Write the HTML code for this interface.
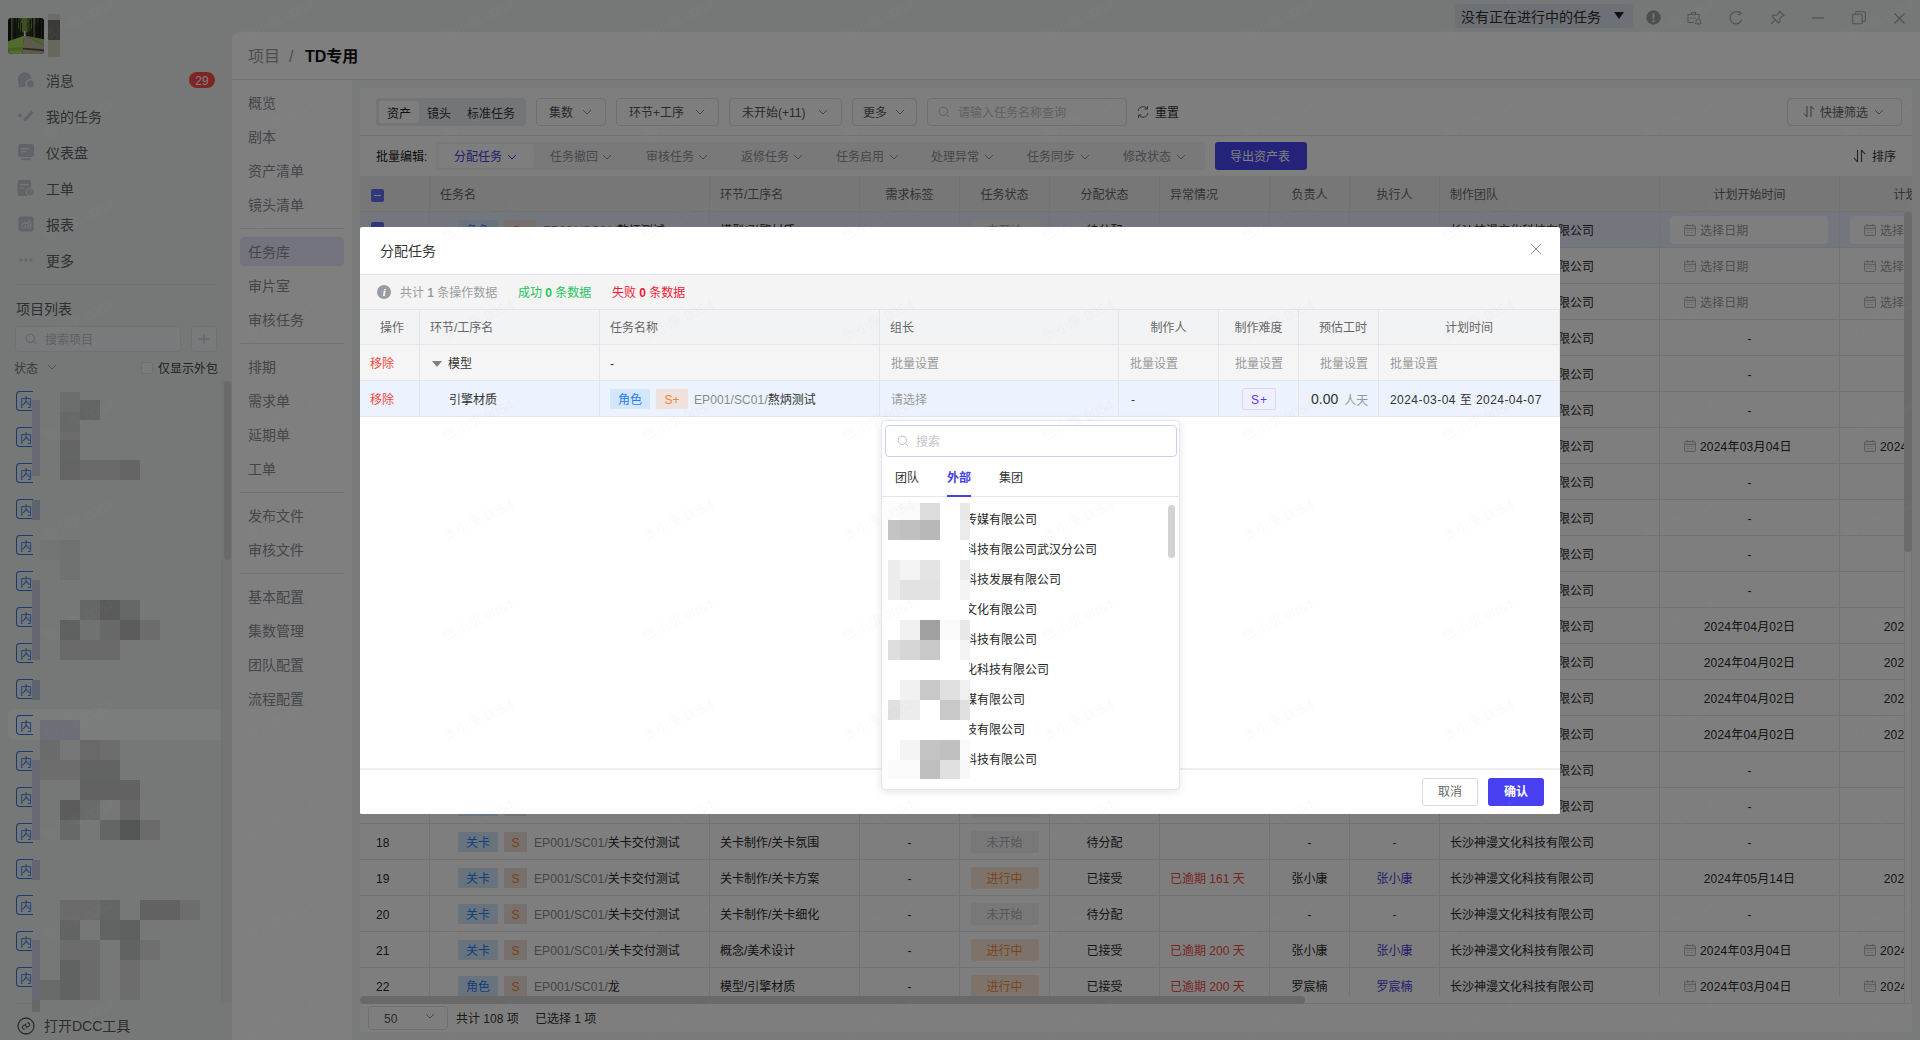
<!DOCTYPE html><html lang="zh-CN"><head><meta charset="utf-8"><title>TD专用 - 任务库</title><style>
*{box-sizing:border-box;margin:0;padding:0}
html,body{width:1920px;height:1040px;overflow:hidden;background:#edf1f0}
body{font-family:"Liberation Sans","Noto Sans CJK SC",sans-serif;font-size:12px;color:#333;line-height:1}
#app{position:relative;width:1920px;height:1040px;overflow:hidden;background:#edf1f0}
.abs{position:absolute}
.t{position:absolute;white-space:nowrap;line-height:22px;height:22px}
/* sidebar */
.sb-item{position:absolute;left:46px;font-size:14px;color:#5c6068;line-height:22px;white-space:nowrap}
.sb-ico{position:absolute;left:17px;width:18px;height:18px}
.badge{position:absolute;left:189px;top:72px;width:26px;height:16px;border-radius:8px;background:#fc4a4a;color:#fff;font-size:12px;line-height:19px;text-align:center;overflow:hidden}
.proj-tag{position:absolute;left:16px;width:17px;height:20px;border:1px solid #2a7ae8;border-right:none;border-radius:4px 0 0 4px;color:#2a7ae8;font-size:12px;line-height:22px;padding-left:3px;overflow:hidden}
/* main */
#main{position:absolute;left:232px;top:32px;width:1688px;height:1008px;background:#fff;border-radius:8px 0 0 0;overflow:hidden}
.nav-item{position:absolute;left:16px;font-size:14px;color:#888c93;line-height:20px;white-space:nowrap}
.nav-div{position:absolute;left:8px;width:104px;height:1px;background:#e6e7e9}
#gap{position:absolute;left:120px;top:48px;width:1568px;height:960px;background:#f3f4f5}
#card{position:absolute;left:128px;top:56px;width:1552px;height:944px;background:#fcfcfc;overflow:hidden}
.sel{position:absolute;top:10px;height:28px;border:1px solid #dcdee2;border-radius:4px;background:#fcfcfc;font-size:12px;color:#555;line-height:28px;white-space:nowrap;overflow:hidden}
.chev{position:absolute;width:10px;height:6px}
.bt{position:absolute;top:66px;font-size:12px;color:#80848c;line-height:20px;white-space:nowrap}
/* table */
#thead{position:absolute;left:0;top:88px;width:1552px;height:36px;background:#eeefef;border-bottom:1px solid #e3e4e6;overflow:hidden}
#tbody{position:absolute;left:0;top:124px;width:1544px;height:784px;overflow:hidden}
.tr{position:absolute;left:0;width:1660px;height:36px;border-bottom:1px solid #e3e4e6}
.td,.th{position:absolute;top:0;height:36px;border-right:1px solid #e3e4e6;line-height:39px;white-space:nowrap;overflow:hidden;font-size:12px}
.th{color:#666;}
.td{color:#2b2b2b}
.c{text-align:center}
.l{padding-left:10px}
.tag{display:inline-block;position:relative;top:-2px;overflow:hidden;height:20px;line-height:22px;border-radius:1px;font-size:12px;text-align:center;vertical-align:middle}
.tag-b{background:#d3e6fd;color:#1f7ff0;width:40px}
.tag-o{background:#efe1db;color:#f0853a;width:23px;margin-left:6px}
.g{color:#8a8a8a;letter-spacing:.1px}
.st{display:inline-block;position:relative;top:-2px;overflow:hidden;width:68px;height:22px;line-height:24px;border-radius:2px;text-align:center;vertical-align:middle}
.st-n{background:#f0f0f1;color:#a9adb3}
.st-p{background:#fde6d5;color:#f08a3c}
.red{color:#f04a44}
.lnk{color:#4643d8}
.cal{display:inline-block;width:12px;height:12px;vertical-align:-2px;margin-right:4px;position:relative;top:-1px}
/* overlay & modal */
#mask{position:absolute;left:0;top:0;width:1920px;height:1040px;background:rgba(0,0,0,.5)}
#modal{position:absolute;left:360px;top:227px;width:1200px;height:587px;background:#fff;overflow:hidden;border-radius:2px}
.mth{position:absolute;top:0;height:35px;line-height:39px;overflow:hidden;border-right:1px solid #e4e5e8;color:#666;font-size:12px;white-space:nowrap}
.mtd{position:absolute;top:0;height:36px;line-height:39px;overflow:hidden;border-right:1px solid #e4e5e8;font-size:12px;white-space:nowrap;color:#333}
.ph{color:#9a9a9a}
#dd{position:absolute;left:881px;top:420px;width:299px;height:370px;background:#fff;border:1px solid #e3e6f6;border-radius:4px;box-shadow:0 2px 8px rgba(0,0,0,.10);overflow:hidden}
.opt{position:absolute;left:87px;width:200px;height:20px;line-height:20px;font-size:12px;color:#262626;overflow:hidden;white-space:nowrap}
.opt span{display:inline-block;margin-left:-4px}
.px{position:absolute}
.wm{position:absolute;width:80px;text-align:center;font-size:14px;color:rgba(172,172,172,.07);transform:rotate(-25deg);white-space:nowrap;line-height:16px;pointer-events:none}
</style></head><body><div id="app">
<div class="abs" style="left:8px;top:18px;width:36px;height:36px;border-radius:4px;overflow:hidden;background:#2e3022"><svg width="36" height="36" viewBox="0 0 36 36"><g><rect x="-2" y="-2" width="40" height="40" fill="#34382a"/><ellipse cx="17" cy="5" rx="8" ry="10" fill="#7d9c42"/><ellipse cx="25" cy="2" rx="6" ry="5" fill="#5b7431"/><ellipse cx="9" cy="1" rx="5" ry="4" fill="#4d6230"/><rect x="0" y="-1" width="3.2" height="27" fill="#15150f"/><rect x="3.2" y="-1" width="1.2" height="24" fill="#77776a"/><rect x="5.5" y="-1" width="2.2" height="23" fill="#1c1c14"/><rect x="8.6" y="-1" width="1.6" height="22" fill="#24241a"/><rect x="11" y="2" width="1.2" height="19" fill="#2a2a1e"/><rect x="13" y="5" width="1" height="15" fill="#30301f"/><rect x="19.5" y="5" width="1" height="14" fill="#30301f"/><rect x="21.5" y="2" width="1.3" height="18" fill="#26261b"/><rect x="24" y="-1" width="1.5" height="21" fill="#1f1f16"/><rect x="25.5" y="-1" width="1" height="20" fill="#8a8a7c"/><rect x="27.5" y="-1" width="2" height="22" fill="#1a1a12"/><rect x="30.5" y="-1" width="2.300" height="24" fill="#15150f"/><rect x="34" y="-1" width="3" height="25" fill="#1c1c14"/><polygon points="-1,23.500 16.200,17.800 14,37 -1,37" fill="#a6d95c"/><polygon points="-1,30 14.500,29 14.300,32 -1,33" fill="#8dbb4c"/><polygon points="17.500,17.800 37,21.500 37,28 " fill="#9bcd55"/><polygon points="16.100,17.800 17.600,17.800 37,28 37,37 14,37" fill="#bcb49a"/><polygon points="15,29.800 37,31.300 37,33.200 14.800,31.600" fill="#5c574a"/><polygon points="16.300,13 17.300,13 17.800,18 15.900,18" fill="#f4f8ea"/></g></svg></div>
<div class="abs" style="left:48px;top:14px;width:12px;height:6px;background:#d7d7d7"></div>
<div class="abs" style="left:48px;top:20px;width:12px;height:20px;background:#777570"></div>
<div class="abs" style="left:48px;top:40px;width:12px;height:17px;background:#cecebc"></div>
<div class="sb-item" style="top:70px">消息</div>
<div class="sb-item" style="top:106px">我的任务</div>
<div class="sb-item" style="top:142px">仪表盘</div>
<div class="sb-item" style="top:178px">工单</div>
<div class="sb-item" style="top:214px">报表</div>
<div class="sb-item" style="top:250px">更多</div>
<svg class="sb-ico" style="top:71px" viewBox="0 0 18 18"><path d="M8 1.200a7.200 7.200 0 0 0-6.300 10.700L1.600 16.600l5-.900A7.200 7.200 0 1 0 8 1.200z" fill="#c3c7d3"/><circle cx="13.400" cy="12.800" r="4.300" fill="#c3c7d3" stroke="#edf1f0" stroke-width="1.300"/></svg>
<svg class="sb-ico" style="top:107px" viewBox="0 0 18 18"><path d="M7.300 13.600 15.600 4.600" stroke="#c3c7d3" stroke-width="3.200" fill="none"/><path d="M3 6.200l2.300 2.300L3 10.800.700 8.500z" fill="#c3c7d3"/></svg>
<svg class="sb-ico" style="top:143px" viewBox="0 0 18 18"><rect x="1" y="1" width="16" height="13" rx="2.200" fill="#c3c7d3"/><rect x="4" y="15.200" width="10" height="2" rx="1" fill="#c3c7d3"/><rect x="4" y="5" width="8.500" height="1.300" fill="#edf1f0"/><rect x="4" y="8" width="5" height="1.300" fill="#edf1f0"/></svg>
<svg class="sb-ico" style="top:179px" viewBox="0 0 18 18"><rect x=".6" y="1" width="13.400" height="16" rx="1.800" fill="#c3c7d3"/><rect x="3" y="5" width="8.500" height="1.200" fill="#edf1f0"/><rect x="3" y="8.600" width="4" height="1.200" fill="#edf1f0"/><circle cx="13.300" cy="13" r="4" fill="#c3c7d3" stroke="#edf1f0" stroke-width="1"/><text x="13.300" y="15.300" font-size="6.500" text-anchor="middle" fill="#edf1f0" font-family="Liberation Sans,sans-serif">?</text></svg>
<svg class="sb-ico" style="top:215px" viewBox="0 0 18 18"><rect x="1.400" y="1.600" width="15.200" height="14.800" rx="2" fill="#c3c7d3"/><path d="M4.500 10 8 7.500l2 1.200 3.600-3.400" stroke="#edf1f0" stroke-width="1.100" fill="none"/><rect x="4.600" y="11.500" width="1.500" height="2" fill="#edf1f0"/><rect x="7.400" y="10.500" width="1.500" height="3" fill="#edf1f0"/><rect x="10.200" y="9.800" width="1.500" height="3.700" fill="#edf1f0"/><rect x="12.800" y="7.500" width="1.500" height="6" fill="#edf1f0"/></svg>
<svg class="sb-ico" style="top:251px" viewBox="0 0 18 18"><circle cx="4" cy="9" r="1.600" fill="#c3c7d3"/><circle cx="9" cy="9" r="1.600" fill="#c3c7d3"/><circle cx="14" cy="9" r="1.600" fill="#c3c7d3"/></svg>
<div class="badge">29</div>
<div class="abs" style="left:16px;top:284px;width:200px;height:1px;background:#dfe2e1"></div>
<div class="t" style="left:16px;top:298px;font-size:14px;color:#5a5e66">项目列表</div>
<div class="abs" style="left:15px;top:326px;width:166px;height:26px;border:1px solid #e0e3e6;border-radius:4px;background:#f3f5f6"></div>
<svg class="abs" style="left:25px;top:333px;width:12px;height:12px" viewBox="0 0 12 12"><circle cx="5.3" cy="5.3" r="4.2" fill="none" stroke="#b9bcc2" stroke-width="1"/><path d="M8.4 8.4 11 11" stroke="#b9bcc2" stroke-width="1"/></svg>
<div class="t" style="left:45px;top:329px;color:#bfc2c8">搜索项目</div>
<div class="abs" style="left:191px;top:326px;width:26px;height:26px;border:1px solid #e0e3e6;border-radius:4px;background:#f3f5f6"></div>
<svg class="abs" style="left:199px;top:334px;width:10px;height:10px" viewBox="0 0 10 10"><path d="M5 0v10M0 5h10" stroke="#b9bcc2" stroke-width="1"/></svg>
<div class="t" style="left:14px;top:358px;color:#70747b">状态</div>
<svg class="chev" style="left:47px;top:364px" viewBox="0 0 10 6"><path d="M1 1l4 4 4-4" fill="none" stroke="#9a9da3" stroke-width="1"/></svg>
<div class="abs" style="left:141px;top:362px;width:12px;height:12px;border:1px solid #dcdfe3;border-radius:2px;background:#f3f5f6"></div>
<div class="t" style="left:158px;top:358px;color:#3c3f44">仅显示外包</div>
<div class="abs" style="left:8px;top:709px;width:216px;height:31px;border-radius:6px;background:#f6f8f8"></div>
<div class="proj-tag" style="top:391px">内</div>
<div class="proj-tag" style="top:427px">内</div>
<div class="proj-tag" style="top:463px">内</div>
<div class="proj-tag" style="top:499px">内</div>
<div class="proj-tag" style="top:535px">内</div>
<div class="proj-tag" style="top:571px">内</div>
<div class="proj-tag" style="top:607px">内</div>
<div class="proj-tag" style="top:643px">内</div>
<div class="proj-tag" style="top:679px">内</div>
<div class="proj-tag" style="top:715px">内</div>
<div class="proj-tag" style="top:751px">内</div>
<div class="proj-tag" style="top:787px">内</div>
<div class="proj-tag" style="top:823px">内</div>
<div class="proj-tag" style="top:859px">内</div>
<div class="proj-tag" style="top:895px">内</div>
<div class="proj-tag" style="top:931px">内</div>
<div class="proj-tag" style="top:967px">内</div>
<div class="px" style="left:32px;top:400px;width:8px;height:76px;background:#cfd5e6"></div>
<div class="px" style="left:60px;top:392px;width:20px;height:20px;background:#d9dcdb"></div>
<div class="px" style="left:60px;top:412px;width:20px;height:20px;background:#cfd1d0"></div>
<div class="px" style="left:80px;top:400px;width:20px;height:20px;background:#c7c9c8"></div>
<div class="px" style="left:60px;top:432px;width:20px;height:24px;background:#d6d8d7"></div>
<div class="px" style="left:60px;top:440px;width:20px;height:20px;background:#c9cbca"></div>
<div class="px" style="left:60px;top:460px;width:20px;height:20px;background:#c6c8c7"></div>
<div class="px" style="left:80px;top:460px;width:40px;height:20px;background:#d0d2d1"></div>
<div class="px" style="left:120px;top:460px;width:20px;height:20px;background:#c8cac9"></div>
<div class="px" style="left:32px;top:500px;width:8px;height:20px;background:#bcc8dc"></div>
<div class="px" style="left:40px;top:540px;width:40px;height:20px;background:#e4e8e7"></div>
<div class="px" style="left:60px;top:540px;width:20px;height:40px;background:#e0e3e2"></div>
<div class="px" style="left:32px;top:580px;width:8px;height:80px;background:#c9cede"></div>
<div class="px" style="left:80px;top:600px;width:20px;height:20px;background:#cbcdcc"></div>
<div class="px" style="left:100px;top:600px;width:20px;height:20px;background:#b4b6b5"></div>
<div class="px" style="left:120px;top:600px;width:20px;height:20px;background:#cdcfce"></div>
<div class="px" style="left:60px;top:620px;width:20px;height:20px;background:#bfc1c0"></div>
<div class="px" style="left:80px;top:620px;width:20px;height:20px;background:#e0e3e2"></div>
<div class="px" style="left:100px;top:620px;width:20px;height:20px;background:#cfd1d0"></div>
<div class="px" style="left:120px;top:620px;width:20px;height:20px;background:#b6b8b7"></div>
<div class="px" style="left:140px;top:620px;width:20px;height:20px;background:#d6d8d7"></div>
<div class="px" style="left:60px;top:640px;width:60px;height:20px;background:#d0d2d1"></div>
<div class="px" style="left:32px;top:680px;width:8px;height:20px;background:#bcc8dc"></div>
<div class="px" style="left:40px;top:720px;width:40px;height:20px;background:#dcdcee"></div>
<div class="px" style="left:40px;top:740px;width:20px;height:20px;background:#d5d7d6"></div>
<div class="px" style="left:80px;top:740px;width:20px;height:20px;background:#d0d2d1"></div>
<div class="px" style="left:100px;top:740px;width:20px;height:20px;background:#d8dad9"></div>
<div class="px" style="left:32px;top:760px;width:8px;height:80px;background:#cdd2e2"></div>
<div class="px" style="left:40px;top:760px;width:40px;height:20px;background:#d8dad9"></div>
<div class="px" style="left:80px;top:760px;width:40px;height:20px;background:#c5c7c6"></div>
<div class="px" style="left:80px;top:780px;width:60px;height:20px;background:#c2c4c3"></div>
<div class="px" style="left:60px;top:800px;width:20px;height:20px;background:#b6b8b7"></div>
<div class="px" style="left:80px;top:800px;width:20px;height:20px;background:#d3d5d4"></div>
<div class="px" style="left:120px;top:800px;width:20px;height:20px;background:#cccecd"></div>
<div class="px" style="left:60px;top:820px;width:20px;height:20px;background:#cfd1d0"></div>
<div class="px" style="left:100px;top:820px;width:20px;height:20px;background:#c9cbca"></div>
<div class="px" style="left:120px;top:820px;width:20px;height:20px;background:#a9abaa"></div>
<div class="px" style="left:140px;top:820px;width:20px;height:20px;background:#d4d6d5"></div>
<div class="px" style="left:32px;top:860px;width:8px;height:20px;background:#c6cce0"></div>
<div class="px" style="left:60px;top:900px;width:60px;height:20px;background:#d4d6d5"></div>
<div class="px" style="left:100px;top:900px;width:20px;height:20px;background:#c9cbca"></div>
<div class="px" style="left:140px;top:900px;width:40px;height:20px;background:#c2c4c3"></div>
<div class="px" style="left:180px;top:900px;width:20px;height:20px;background:#d8dad9"></div>
<div class="px" style="left:60px;top:920px;width:20px;height:20px;background:#c5c7c6"></div>
<div class="px" style="left:100px;top:920px;width:20px;height:20px;background:#c4c6c5"></div>
<div class="px" style="left:120px;top:920px;width:20px;height:20px;background:#bdbfbe"></div>
<div class="px" style="left:32px;top:940px;width:8px;height:60px;background:#cdd2e2"></div>
<div class="px" style="left:60px;top:940px;width:40px;height:20px;background:#d6d8d7"></div>
<div class="px" style="left:120px;top:940px;width:20px;height:20px;background:#c3c5c4"></div>
<div class="px" style="left:140px;top:940px;width:20px;height:20px;background:#dadcdb"></div>
<div class="px" style="left:60px;top:960px;width:20px;height:40px;background:#c3c5c4"></div>
<div class="px" style="left:80px;top:960px;width:20px;height:40px;background:#d4d6d5"></div>
<div class="px" style="left:120px;top:960px;width:20px;height:40px;background:#d8dad9"></div>
<div class="px" style="left:40px;top:980px;width:20px;height:20px;background:#d0d2d1"></div>
<div class="px" style="left:32px;top:1000px;width:8px;height:12px;background:#cfcfcf"></div>
<div class="abs" style="left:222px;top:381px;width:10px;height:622px;background:#e7ebea"></div>
<div class="abs" style="left:224px;top:381px;width:7px;height:179px;border-radius:4px;background:#d3d5d4"></div>
<div class="abs" style="left:221px;top:560px;width:1px;height:444px;background:#e3e6e5"></div>
<div class="abs" style="left:16px;top:1003px;width:16px;height:1px;background:#dfe2e1"></div>
<svg class="abs" style="left:17px;top:1017px;width:18px;height:18px" viewBox="0 0 18 18"><circle cx="9" cy="9" r="8" fill="none" stroke="#55585e" stroke-width="1.3"/><path d="M6.2 10.8a1.9 1.9 0 0 1 0-3.6h1.6a1.9 1.9 0 0 1 0 3.6M11.8 7.2a1.9 1.9 0 0 1 0 3.6h-1.6a1.9 1.9 0 0 1 0-3.6" fill="none" stroke="#55585e" stroke-width="1.1" transform="rotate(-35 9 9)"/></svg>
<div class="t" style="left:44px;top:1015px;font-size:14px;color:#55585e">打开DCC工具</div>
<div class="abs" style="left:1455px;top:4px;width:178px;height:24px;border-radius:4px;background:#dbe0ea"></div>
<div class="t" style="left:1461px;top:5.5px;font-size:14px;color:#2e2e2e">没有正在进行中的任务</div>
<svg class="abs" style="left:1614px;top:12px;width:10px;height:7px" viewBox="0 0 10 7"><path d="M0 0h10L5 7z" fill="#222"/></svg>
<svg class="abs" style="left:1646px;top:10px;width:15px;height:15px" viewBox="0 0 15 15"><circle cx="7.5" cy="7.5" r="7.2" fill="#9d9d9d"/><rect x="6.6" y="3" width="1.8" height="6" rx=".9" fill="#edf1f0"/><circle cx="7.5" cy="11.2" r="1.1" fill="#edf1f0"/></svg>
<svg class="abs" style="left:1686px;top:10px;width:16px;height:16px" viewBox="0 0 16 16"><path d="M2 4.5h11v4M2 4.5v8h6M5.5 4.5v-2h4v2" fill="none" stroke="#a3a5a5" stroke-width="1.1"/><path d="M4 8h2.5M7.5 8H10" stroke="#a3a5a5" stroke-width="1"/><path d="M12.2 9a2.2 2.2 0 0 1 2.2 2.2v1.6l.8 1h-6l.8-1v-1.6A2.2 2.2 0 0 1 12.200 9zM11.500 14.800h1.4" fill="none" stroke="#a3a5a5" stroke-width="1"/></svg>
<svg class="abs" style="left:1728px;top:10px;width:16px;height:16px" viewBox="0 0 16 16"><path d="M13.8 9.2A6 6 0 1 1 11.600 3" fill="none" stroke="#a3a5a5" stroke-width="1.2"/><path d="M10.500 1l2.6 2.4-3 1.500" fill="none" stroke="#a3a5a5" stroke-width="1.1"/></svg>
<svg class="abs" style="left:1769px;top:9px;width:17px;height:17px" viewBox="0 0 17 17"><path d="M10.500 2l4.500 4.500-2 .7-2.300 2.300.3 3-1.500 1.500L3 7.500 4.500 6l3 .3 2.300-2.300zM6.200 10.800 2 15" fill="none" stroke="#a3a5a5" stroke-width="1.1" stroke-linejoin="round"/></svg>
<div class="abs" style="left:1812px;top:17px;width:12px;height:1.5px;background:#bfc1c1"></div>
<svg class="abs" style="left:1852px;top:11px;width:14px;height:14px" viewBox="0 0 14 14"><rect x=".7" y="3.3" width="9.500" height="9.500" rx="1" fill="none" stroke="#a3a5a5" stroke-width="1.1"/><path d="M3.500 3V1.700a1 1 0 0 1 1-1h7.800a1 1 0 0 1 1 1v7.800a1 1 0 0 1-1 1H10.500" fill="none" stroke="#a3a5a5" stroke-width="1.1"/></svg>
<svg class="abs" style="left:1894px;top:13px;width:11px;height:11px" viewBox="0 0 11 11"><path d="M.5.5l10 10M10.500.5l-10 10" stroke="#a3a5a5" stroke-width="1.2"/></svg>
<div id="main">
<div class="t" style="left:16px;top:12px;font-size:16px;line-height:26px;height:26px;color:#999ca1">项目</div>
<div class="t" style="left:57px;top:12px;font-size:16px;line-height:26px;height:26px;color:#9a9da2">/</div>
<div class="t" style="left:73px;top:12px;font-size:16px;line-height:26px;height:26px;color:#111;font-weight:bold">TD专用</div>
<div class="abs" style="left:0;top:47px;width:1688px;height:1px;background:#e6e7e9"></div>
<div class="abs" style="left:8px;top:205px;width:104px;height:29px;border-radius:4px;background:#e9e9ff"></div>
<div class="nav-item" style="top:61px">概览</div>
<div class="nav-item" style="top:95px">剧本</div>
<div class="nav-item" style="top:129px">资产清单</div>
<div class="nav-item" style="top:163px">镜头清单</div>
<div class="nav-item" style="top:210px">任务库</div>
<div class="nav-item" style="top:244px">审片室</div>
<div class="nav-item" style="top:278px">审核任务</div>
<div class="nav-item" style="top:325px">排期</div>
<div class="nav-item" style="top:359px">需求单</div>
<div class="nav-item" style="top:393px">延期单</div>
<div class="nav-item" style="top:427px">工单</div>
<div class="nav-item" style="top:474px">发布文件</div>
<div class="nav-item" style="top:508px">审核文件</div>
<div class="nav-item" style="top:555px">基本配置</div>
<div class="nav-item" style="top:589px">集数管理</div>
<div class="nav-item" style="top:623px">团队配置</div>
<div class="nav-item" style="top:657px">流程配置</div>
<div class="nav-div" style="top:196px"></div>
<div class="nav-div" style="top:311px"></div>
<div class="nav-div" style="top:460px"></div>
<div class="nav-div" style="top:541px"></div>
<div id="gap"></div>
<div id="card">
<div class="abs" style="left:16px;top:10px;width:150px;height:28px;border-radius:4px;background:#e7eaef"></div>
<div class="abs" style="left:19px;top:13px;width:40px;height:22px;border-radius:3px;background:#fcfcfc"></div>
<div class="t" style="left:27px;top:14.5px;color:#1d1d1d">资产</div><div class="t" style="left:67px;top:14.5px;color:#333">镜头</div><div class="t" style="left:107px;top:14.5px;color:#333">标准任务</div>
<div class="sel" style="left:176px;width:70px;padding-left:12px">集数</div>
<svg class="chev" style="left:222px;top:21px" viewBox="0 0 10 6"><path d="M1 1l4 4 4-4" fill="none" stroke="#8a8d93" stroke-width="1"/></svg>
<div class="sel" style="left:256px;width:103px;padding-left:12px">环节+工序</div>
<svg class="chev" style="left:335px;top:21px" viewBox="0 0 10 6"><path d="M1 1l4 4 4-4" fill="none" stroke="#8a8d93" stroke-width="1"/></svg>
<div class="sel" style="left:369px;width:113px;padding-left:12px">未开始(+11)</div>
<svg class="chev" style="left:458px;top:21px" viewBox="0 0 10 6"><path d="M1 1l4 4 4-4" fill="none" stroke="#8a8d93" stroke-width="1"/></svg>
<div class="sel" style="left:492px;width:65px;padding-left:10px">更多</div>
<svg class="chev" style="left:535px;top:21px" viewBox="0 0 10 6"><path d="M1 1l4 4 4-4" fill="none" stroke="#8a8d93" stroke-width="1"/></svg>
<div class="sel" style="left:567px;width:200px"></div>
<svg class="abs" style="left:578px;top:18px;width:12px;height:12px" viewBox="0 0 12 12"><circle cx="5.3" cy="5.3" r="4.2" fill="none" stroke="#b9bcc2" stroke-width="1"/><path d="M8.400 8.400 11 11" stroke="#b9bcc2" stroke-width="1"/></svg>
<div class="t" style="left:598px;top:14px;color:#bfc2c8">请输入任务名称查询</div>
<svg class="abs" style="left:776px;top:17px;width:14px;height:14px" viewBox="0 0 14 14"><path d="M2 6a5 5 0 0 1 9-2.300M12 8a5 5 0 0 1-9 2.300" fill="none" stroke="#6a6a6a" stroke-width="1"/><path d="M11.500 1v3h-3M2.500 13v-3h3" fill="none" stroke="#6a6a6a" stroke-width="1"/></svg>
<div class="t" style="left:795px;top:14px;color:#333">重置</div>
<div class="sel" style="left:1427px;width:115px"></div>
<svg class="abs" style="left:1443px;top:17px;width:12px;height:13px" viewBox="0 0 12 13"><path d="M4 1v11M4 12 1 8.500M8 12V1M8 1l3 3.500" fill="none" stroke="#70747b" stroke-width="1"/></svg>
<div class="t" style="left:1460px;top:14px;color:#666">快捷筛选</div>
<svg class="chev" style="left:1514px;top:21px" viewBox="0 0 10 6"><path d="M1 1l4 4 4-4" fill="none" stroke="#8a8d93" stroke-width="1"/></svg>
<div class="abs" style="left:0;top:47px;width:1552px;height:1px;background:#e3e4e6"></div>
<div class="t" style="left:16px;top:58px;color:#1a1a1a">批量编辑:</div>
<div class="abs" style="left:76px;top:54px;width:769px;height:28px;border-radius:4px;background:#f2f3f5"></div>
<div class="abs" style="left:78px;top:56px;width:96px;height:24px;border-radius:3px;background:#fcfcfc"></div>
<div class="t" style="left:94px;top:58px;color:#4340dc">分配任务</div>
<svg class="chev" style="left:147px;top:66px" viewBox="0 0 10 6"><path d="M1 1l4 4 4-4" fill="none" stroke="#4340dc" stroke-width="1"/></svg>
<div class="t" style="left:190px;top:58px;color:#8b8f96">任务撤回</div>
<svg class="chev" style="left:242px;top:66px" viewBox="0 0 10 6"><path d="M1 1l4 4 4-4" fill="none" stroke="#8b8f96" stroke-width="1"/></svg>
<div class="t" style="left:286px;top:58px;color:#8b8f96">审核任务</div>
<svg class="chev" style="left:338px;top:66px" viewBox="0 0 10 6"><path d="M1 1l4 4 4-4" fill="none" stroke="#8b8f96" stroke-width="1"/></svg>
<div class="t" style="left:381px;top:58px;color:#8b8f96">返修任务</div>
<svg class="chev" style="left:433px;top:66px" viewBox="0 0 10 6"><path d="M1 1l4 4 4-4" fill="none" stroke="#8b8f96" stroke-width="1"/></svg>
<div class="t" style="left:476px;top:58px;color:#8b8f96">任务启用</div>
<svg class="chev" style="left:529px;top:66px" viewBox="0 0 10 6"><path d="M1 1l4 4 4-4" fill="none" stroke="#8b8f96" stroke-width="1"/></svg>
<div class="t" style="left:571px;top:58px;color:#8b8f96">处理异常</div>
<svg class="chev" style="left:624px;top:66px" viewBox="0 0 10 6"><path d="M1 1l4 4 4-4" fill="none" stroke="#8b8f96" stroke-width="1"/></svg>
<div class="t" style="left:667px;top:58px;color:#8b8f96">任务同步</div>
<svg class="chev" style="left:720px;top:66px" viewBox="0 0 10 6"><path d="M1 1l4 4 4-4" fill="none" stroke="#8b8f96" stroke-width="1"/></svg>
<div class="t" style="left:763px;top:58px;color:#8b8f96">修改状态</div>
<svg class="chev" style="left:816px;top:66px" viewBox="0 0 10 6"><path d="M1 1l4 4 4-4" fill="none" stroke="#8b8f96" stroke-width="1"/></svg>
<div class="abs" style="left:855px;top:54px;width:92px;height:28px;border-radius:3px;background:#4a45f2"></div>
<div class="t" style="left:870px;top:58px;color:#fff">导出资产表</div>
<svg class="abs" style="left:1493px;top:61px;width:13px;height:14px" viewBox="0 0 13 14"><path d="M4.500 1v12M4.500 13 1 9M8.500 13V1M8.500 1 12 5" fill="none" stroke="#444" stroke-width="1.1"/></svg>
<div class="t" style="left:1512px;top:58px;color:#333">排序</div>
<div id="thead">
<div class="th " style="left:0px;width:70px"></div>
<div class="th l" style="left:70px;width:280px">任务名</div>
<div class="th l" style="left:350px;width:150px">环节/工序名</div>
<div class="th c" style="left:500px;width:100px">需求标签</div>
<div class="th c" style="left:600px;width:90px">任务状态</div>
<div class="th c" style="left:690px;width:110px">分配状态</div>
<div class="th l" style="left:800px;width:110px">异常情况</div>
<div class="th c" style="left:910px;width:80px">负责人</div>
<div class="th c" style="left:990px;width:90px">执行人</div>
<div class="th l" style="left:1080px;width:220px">制作团队</div>
<div class="th c" style="left:1300px;width:180px">计划开始时间</div>
<div class="th c" style="left:1480px;width:180px">计划结束时间</div>
<div class="abs" style="left:10.5px;top:13px;width:13px;height:13px;border-radius:2px;background:#656df5"></div><div class="abs" style="left:13.5px;top:18.7px;width:7px;height:1.6px;background:#fff"></div>
</div>
<div id="tbody">
<div class="tr" style="top:0px;background:#e7ecfb;">
<div class="td " style="left:0px;width:70px;"><span style="display:inline-block;position:relative;top:-2px;width:13px;height:13px;border-radius:2px;background:#656df5;vertical-align:-2px;margin-left:10.5px"></span></div>
<div class="td " style="left:70px;width:280px;"><span style="display:inline-block;width:28px"></span><span class="tag tag-b">角色</span><span class="tag tag-o" style="width:32px">S+</span><span class="g" style="margin-left:7px;vertical-align:middle">EP001/SC01/</span><span style="vertical-align:middle">熬炳测试</span></div>
<div class="td l" style="left:350px;width:150px;">模型/引擎材质</div>
<div class="td c" style="left:500px;width:100px;">-</div>
<div class="td c" style="left:600px;width:90px;"><span class="st st-n">未开始</span></div>
<div class="td c" style="left:690px;width:110px;">待分配</div>
<div class="td l" style="left:800px;width:110px;"><span class="red"></span></div>
<div class="td c" style="left:910px;width:80px;">-</div>
<div class="td c" style="left:990px;width:90px;"><span class="lnk">-</span></div>
<div class="td l" style="left:1080px;width:220px;">长沙神漫文化科技有限公司</div>
<div class="td " style="left:1300px;width:180px;padding-left:10px;"><span style="display:inline-block;position:relative;top:-2px;width:158px;height:28px;line-height:31px;overflow:hidden;border-radius:4px;background:#fcfcfc;vertical-align:middle;text-align:left;padding-left:14px"><svg class="cal" viewBox="0 0 12 12"><rect x=".6" y="1.600" width="10.800" height="9.800" rx=".8" fill="none" stroke="#aeb1b8" stroke-width="1"/><path d="M.600 4.300h10.800M3.300 0v2.600M8.700 0v2.600" stroke="#aeb1b8" stroke-width="1"/><path d="M2.600 6.400h6.800M2.600 8.600h6.800" stroke="#c4c7cc" stroke-width=".8" stroke-dasharray="1.400 .6"/></svg><span class="g" style="color:#9a9da3">选择日期</span></span></div>
<div class="td " style="left:1480px;width:180px;padding-left:10px;"><span style="display:inline-block;position:relative;top:-2px;width:158px;height:28px;line-height:31px;overflow:hidden;border-radius:4px;background:#fcfcfc;vertical-align:middle;text-align:left;padding-left:14px"><svg class="cal" viewBox="0 0 12 12"><rect x=".6" y="1.600" width="10.800" height="9.800" rx=".8" fill="none" stroke="#aeb1b8" stroke-width="1"/><path d="M.600 4.300h10.800M3.300 0v2.600M8.700 0v2.600" stroke="#aeb1b8" stroke-width="1"/><path d="M2.600 6.400h6.800M2.600 8.600h6.800" stroke="#c4c7cc" stroke-width=".8" stroke-dasharray="1.400 .6"/></svg><span class="g" style="color:#9a9da3">选择日期</span></span></div>
</div>
<div class="tr" style="top:36px;">
<div class="td " style="left:0px;width:70px;"><span style="margin-left:16px">2</span></div>
<div class="td " style="left:70px;width:280px;"><span style="display:inline-block;width:28px"></span><span class="tag tag-b">角色</span><span class="tag tag-o" style="width:32px">S+</span><span class="g" style="margin-left:7px;vertical-align:middle">EP001/SC01/</span><span style="vertical-align:middle">熬炳测试</span></div>
<div class="td l" style="left:350px;width:150px;">模型/高模雕刻</div>
<div class="td c" style="left:500px;width:100px;">-</div>
<div class="td c" style="left:600px;width:90px;"><span class="st st-n">未开始</span></div>
<div class="td c" style="left:690px;width:110px;">待分配</div>
<div class="td l" style="left:800px;width:110px;"><span class="red"></span></div>
<div class="td c" style="left:910px;width:80px;">-</div>
<div class="td c" style="left:990px;width:90px;"><span class="lnk">-</span></div>
<div class="td l" style="left:1080px;width:220px;">长沙神漫文化科技有限公司</div>
<div class="td " style="left:1300px;width:180px;padding-left:24px;"><svg class="cal" viewBox="0 0 12 12"><rect x=".6" y="1.600" width="10.800" height="9.800" rx=".8" fill="none" stroke="#aeb1b8" stroke-width="1"/><path d="M.600 4.300h10.800M3.300 0v2.600M8.700 0v2.600" stroke="#aeb1b8" stroke-width="1"/><path d="M2.600 6.400h6.800M2.600 8.600h6.800" stroke="#c4c7cc" stroke-width=".8" stroke-dasharray="1.400 .6"/></svg><span class="g" style="color:#9a9da3">选择日期</span></div>
<div class="td " style="left:1480px;width:180px;padding-left:24px;"><svg class="cal" viewBox="0 0 12 12"><rect x=".6" y="1.600" width="10.800" height="9.800" rx=".8" fill="none" stroke="#aeb1b8" stroke-width="1"/><path d="M.600 4.300h10.800M3.300 0v2.600M8.700 0v2.600" stroke="#aeb1b8" stroke-width="1"/><path d="M2.600 6.400h6.800M2.600 8.600h6.800" stroke="#c4c7cc" stroke-width=".8" stroke-dasharray="1.400 .6"/></svg><span class="g" style="color:#9a9da3">选择日期</span></div>
</div>
<div class="tr" style="top:72px;">
<div class="td " style="left:0px;width:70px;"><span style="margin-left:16px">3</span></div>
<div class="td " style="left:70px;width:280px;"><span style="display:inline-block;width:28px"></span><span class="tag tag-b">角色</span><span class="tag tag-o" style="width:32px">S+</span><span class="g" style="margin-left:7px;vertical-align:middle">EP001/SC01/</span><span style="vertical-align:middle">熬炳测试</span></div>
<div class="td l" style="left:350px;width:150px;">模型/拓扑UV</div>
<div class="td c" style="left:500px;width:100px;">-</div>
<div class="td c" style="left:600px;width:90px;"><span class="st st-n">未开始</span></div>
<div class="td c" style="left:690px;width:110px;">待分配</div>
<div class="td l" style="left:800px;width:110px;"><span class="red"></span></div>
<div class="td c" style="left:910px;width:80px;">-</div>
<div class="td c" style="left:990px;width:90px;"><span class="lnk">-</span></div>
<div class="td l" style="left:1080px;width:220px;">长沙神漫文化科技有限公司</div>
<div class="td " style="left:1300px;width:180px;padding-left:24px;"><svg class="cal" viewBox="0 0 12 12"><rect x=".6" y="1.600" width="10.800" height="9.800" rx=".8" fill="none" stroke="#aeb1b8" stroke-width="1"/><path d="M.600 4.300h10.800M3.300 0v2.600M8.700 0v2.600" stroke="#aeb1b8" stroke-width="1"/><path d="M2.600 6.400h6.800M2.600 8.600h6.800" stroke="#c4c7cc" stroke-width=".8" stroke-dasharray="1.400 .6"/></svg><span class="g" style="color:#9a9da3">选择日期</span></div>
<div class="td " style="left:1480px;width:180px;padding-left:24px;"><svg class="cal" viewBox="0 0 12 12"><rect x=".6" y="1.600" width="10.800" height="9.800" rx=".8" fill="none" stroke="#aeb1b8" stroke-width="1"/><path d="M.600 4.300h10.800M3.300 0v2.600M8.700 0v2.600" stroke="#aeb1b8" stroke-width="1"/><path d="M2.600 6.400h6.800M2.600 8.600h6.800" stroke="#c4c7cc" stroke-width=".8" stroke-dasharray="1.400 .6"/></svg><span class="g" style="color:#9a9da3">选择日期</span></div>
</div>
<div class="tr" style="top:108px;">
<div class="td " style="left:0px;width:70px;"><span style="margin-left:16px">4</span></div>
<div class="td " style="left:70px;width:280px;"><span style="display:inline-block;width:28px"></span><span class="tag tag-b">角色</span><span class="tag tag-o" style="width:32px">S+</span><span class="g" style="margin-left:7px;vertical-align:middle">EP001/SC01/</span><span style="vertical-align:middle">熬炳测试</span></div>
<div class="td l" style="left:350px;width:150px;">绑定/骨骼绑定</div>
<div class="td c" style="left:500px;width:100px;">-</div>
<div class="td c" style="left:600px;width:90px;"><span class="st st-n">未开始</span></div>
<div class="td c" style="left:690px;width:110px;">待分配</div>
<div class="td l" style="left:800px;width:110px;"><span class="red"></span></div>
<div class="td c" style="left:910px;width:80px;">-</div>
<div class="td c" style="left:990px;width:90px;"><span class="lnk">-</span></div>
<div class="td l" style="left:1080px;width:220px;">长沙神漫文化科技有限公司</div>
<div class="td c" style="left:1300px;width:180px;">-</div>
<div class="td c" style="left:1480px;width:180px;">-</div>
</div>
<div class="tr" style="top:144px;">
<div class="td " style="left:0px;width:70px;"><span style="margin-left:16px">5</span></div>
<div class="td " style="left:70px;width:280px;"><span style="display:inline-block;width:28px"></span><span class="tag tag-b">角色</span><span class="tag tag-o" style="width:32px">S+</span><span class="g" style="margin-left:7px;vertical-align:middle">EP001/SC01/</span><span style="vertical-align:middle">熬炳测试</span></div>
<div class="td l" style="left:350px;width:150px;">绑定/表情绑定</div>
<div class="td c" style="left:500px;width:100px;">-</div>
<div class="td c" style="left:600px;width:90px;"><span class="st st-n">未开始</span></div>
<div class="td c" style="left:690px;width:110px;">待分配</div>
<div class="td l" style="left:800px;width:110px;"><span class="red"></span></div>
<div class="td c" style="left:910px;width:80px;">-</div>
<div class="td c" style="left:990px;width:90px;"><span class="lnk">-</span></div>
<div class="td l" style="left:1080px;width:220px;">长沙神漫文化科技有限公司</div>
<div class="td c" style="left:1300px;width:180px;">-</div>
<div class="td c" style="left:1480px;width:180px;">-</div>
</div>
<div class="tr" style="top:180px;">
<div class="td " style="left:0px;width:70px;"><span style="margin-left:16px">6</span></div>
<div class="td " style="left:70px;width:280px;"><span style="display:inline-block;width:28px"></span><span class="tag tag-b">角色</span><span class="tag tag-o" style="width:32px">S+</span><span class="g" style="margin-left:7px;vertical-align:middle">EP001/SC01/</span><span style="vertical-align:middle">熬炳测试</span></div>
<div class="td l" style="left:350px;width:150px;">概念/美术设计</div>
<div class="td c" style="left:500px;width:100px;">-</div>
<div class="td c" style="left:600px;width:90px;"><span class="st st-n">未开始</span></div>
<div class="td c" style="left:690px;width:110px;">待分配</div>
<div class="td l" style="left:800px;width:110px;"><span class="red"></span></div>
<div class="td c" style="left:910px;width:80px;">-</div>
<div class="td c" style="left:990px;width:90px;"><span class="lnk">-</span></div>
<div class="td l" style="left:1080px;width:220px;">长沙神漫文化科技有限公司</div>
<div class="td c" style="left:1300px;width:180px;">-</div>
<div class="td c" style="left:1480px;width:180px;">-</div>
</div>
<div class="tr" style="top:216px;">
<div class="td " style="left:0px;width:70px;"><span style="margin-left:16px">7</span></div>
<div class="td " style="left:70px;width:280px;"><span style="display:inline-block;width:28px"></span><span class="tag tag-b">角色</span><span class="tag tag-o" style="width:23px">S</span><span class="g" style="margin-left:7px;vertical-align:middle">EP001/SC01/</span><span style="vertical-align:middle">哪吒测试</span></div>
<div class="td l" style="left:350px;width:150px;">模型/引擎材质</div>
<div class="td c" style="left:500px;width:100px;">-</div>
<div class="td c" style="left:600px;width:90px;"><span class="st st-p">进行中</span></div>
<div class="td c" style="left:690px;width:110px;">已接受</div>
<div class="td l" style="left:800px;width:110px;"><span class="red">已逾期 200 天</span></div>
<div class="td c" style="left:910px;width:80px;">张小康</div>
<div class="td c" style="left:990px;width:90px;"><span class="lnk">张小康</span></div>
<div class="td l" style="left:1080px;width:220px;">长沙神漫文化科技有限公司</div>
<div class="td " style="left:1300px;width:180px;padding-left:24px;"><svg class="cal" viewBox="0 0 12 12"><rect x=".6" y="1.600" width="10.800" height="9.800" rx=".8" fill="none" stroke="#aeb1b8" stroke-width="1"/><path d="M.600 4.300h10.800M3.300 0v2.600M8.700 0v2.600" stroke="#aeb1b8" stroke-width="1"/><path d="M2.600 6.400h6.800M2.600 8.600h6.800" stroke="#c4c7cc" stroke-width=".8" stroke-dasharray="1.400 .6"/></svg><span style="letter-spacing:.2px">2024年03月04日</span></div>
<div class="td " style="left:1480px;width:180px;padding-left:24px;"><svg class="cal" viewBox="0 0 12 12"><rect x=".6" y="1.600" width="10.800" height="9.800" rx=".8" fill="none" stroke="#aeb1b8" stroke-width="1"/><path d="M.600 4.300h10.800M3.300 0v2.600M8.700 0v2.600" stroke="#aeb1b8" stroke-width="1"/><path d="M2.600 6.400h6.800M2.600 8.600h6.800" stroke="#c4c7cc" stroke-width=".8" stroke-dasharray="1.400 .6"/></svg><span style="letter-spacing:.2px">2024年03月08日</span></div>
</div>
<div class="tr" style="top:252px;">
<div class="td " style="left:0px;width:70px;"><span style="margin-left:16px">8</span></div>
<div class="td " style="left:70px;width:280px;"><span style="display:inline-block;width:28px"></span><span class="tag tag-b">角色</span><span class="tag tag-o" style="width:23px">S</span><span class="g" style="margin-left:7px;vertical-align:middle">EP001/SC01/</span><span style="vertical-align:middle">哪吒测试</span></div>
<div class="td l" style="left:350px;width:150px;">模型/高模雕刻</div>
<div class="td c" style="left:500px;width:100px;">-</div>
<div class="td c" style="left:600px;width:90px;"><span class="st st-n">未开始</span></div>
<div class="td c" style="left:690px;width:110px;">待分配</div>
<div class="td l" style="left:800px;width:110px;"><span class="red"></span></div>
<div class="td c" style="left:910px;width:80px;">-</div>
<div class="td c" style="left:990px;width:90px;"><span class="lnk">-</span></div>
<div class="td l" style="left:1080px;width:220px;">长沙神漫文化科技有限公司</div>
<div class="td c" style="left:1300px;width:180px;">-</div>
<div class="td c" style="left:1480px;width:180px;">-</div>
</div>
<div class="tr" style="top:288px;">
<div class="td " style="left:0px;width:70px;"><span style="margin-left:16px">9</span></div>
<div class="td " style="left:70px;width:280px;"><span style="display:inline-block;width:28px"></span><span class="tag tag-b">角色</span><span class="tag tag-o" style="width:23px">S</span><span class="g" style="margin-left:7px;vertical-align:middle">EP001/SC01/</span><span style="vertical-align:middle">哪吒测试</span></div>
<div class="td l" style="left:350px;width:150px;">模型/拓扑UV</div>
<div class="td c" style="left:500px;width:100px;">-</div>
<div class="td c" style="left:600px;width:90px;"><span class="st st-n">未开始</span></div>
<div class="td c" style="left:690px;width:110px;">待分配</div>
<div class="td l" style="left:800px;width:110px;"><span class="red"></span></div>
<div class="td c" style="left:910px;width:80px;">-</div>
<div class="td c" style="left:990px;width:90px;"><span class="lnk">-</span></div>
<div class="td l" style="left:1080px;width:220px;">长沙神漫文化科技有限公司</div>
<div class="td c" style="left:1300px;width:180px;">-</div>
<div class="td c" style="left:1480px;width:180px;">-</div>
</div>
<div class="tr" style="top:324px;">
<div class="td " style="left:0px;width:70px;"><span style="margin-left:16px">10</span></div>
<div class="td " style="left:70px;width:280px;"><span style="display:inline-block;width:28px"></span><span class="tag tag-b">角色</span><span class="tag tag-o" style="width:23px">S</span><span class="g" style="margin-left:7px;vertical-align:middle">EP001/SC01/</span><span style="vertical-align:middle">哪吒测试</span></div>
<div class="td l" style="left:350px;width:150px;">绑定/骨骼绑定</div>
<div class="td c" style="left:500px;width:100px;">-</div>
<div class="td c" style="left:600px;width:90px;"><span class="st st-n">未开始</span></div>
<div class="td c" style="left:690px;width:110px;">待分配</div>
<div class="td l" style="left:800px;width:110px;"><span class="red"></span></div>
<div class="td c" style="left:910px;width:80px;">-</div>
<div class="td c" style="left:990px;width:90px;"><span class="lnk">-</span></div>
<div class="td l" style="left:1080px;width:220px;">长沙神漫文化科技有限公司</div>
<div class="td c" style="left:1300px;width:180px;">-</div>
<div class="td c" style="left:1480px;width:180px;">-</div>
</div>
<div class="tr" style="top:360px;">
<div class="td " style="left:0px;width:70px;"><span style="margin-left:16px">11</span></div>
<div class="td " style="left:70px;width:280px;"><span style="display:inline-block;width:28px"></span><span class="tag tag-b">角色</span><span class="tag tag-o" style="width:23px">S</span><span class="g" style="margin-left:7px;vertical-align:middle">EP001/SC01/</span><span style="vertical-align:middle">哪吒测试</span></div>
<div class="td l" style="left:350px;width:150px;">绑定/表情绑定</div>
<div class="td c" style="left:500px;width:100px;">-</div>
<div class="td c" style="left:600px;width:90px;"><span class="st st-n">未开始</span></div>
<div class="td c" style="left:690px;width:110px;">待分配</div>
<div class="td l" style="left:800px;width:110px;"><span class="red"></span></div>
<div class="td c" style="left:910px;width:80px;">-</div>
<div class="td c" style="left:990px;width:90px;"><span class="lnk">-</span></div>
<div class="td l" style="left:1080px;width:220px;">长沙神漫文化科技有限公司</div>
<div class="td c" style="left:1300px;width:180px;">-</div>
<div class="td c" style="left:1480px;width:180px;">-</div>
</div>
<div class="tr" style="top:396px;">
<div class="td " style="left:0px;width:70px;"><span style="margin-left:16px">12</span></div>
<div class="td " style="left:70px;width:280px;"><span style="display:inline-block;width:28px"></span><span class="tag tag-b">道具</span><span class="tag tag-o" style="width:23px">S</span><span class="g" style="margin-left:7px;vertical-align:middle">EP001/SC01/</span><span style="vertical-align:middle">混天绫测试</span></div>
<div class="td l" style="left:350px;width:150px;">模型/引擎材质</div>
<div class="td c" style="left:500px;width:100px;">-</div>
<div class="td c" style="left:600px;width:90px;"><span class="st st-p">进行中</span></div>
<div class="td c" style="left:690px;width:110px;">已接受</div>
<div class="td l" style="left:800px;width:110px;"><span class="red">已逾期 171 天</span></div>
<div class="td c" style="left:910px;width:80px;">张小康</div>
<div class="td c" style="left:990px;width:90px;"><span class="lnk">张小康</span></div>
<div class="td l" style="left:1080px;width:220px;">长沙神漫文化科技有限公司</div>
<div class="td c" style="left:1300px;width:180px;"><span style="letter-spacing:.2px">2024年04月02日</span></div>
<div class="td c" style="left:1480px;width:180px;"><span style="letter-spacing:.2px">2024年04月07日</span></div>
</div>
<div class="tr" style="top:432px;">
<div class="td " style="left:0px;width:70px;"><span style="margin-left:16px">13</span></div>
<div class="td " style="left:70px;width:280px;"><span style="display:inline-block;width:28px"></span><span class="tag tag-b">道具</span><span class="tag tag-o" style="width:23px">S</span><span class="g" style="margin-left:7px;vertical-align:middle">EP001/SC01/</span><span style="vertical-align:middle">混天绫测试</span></div>
<div class="td l" style="left:350px;width:150px;">模型/高模雕刻</div>
<div class="td c" style="left:500px;width:100px;">-</div>
<div class="td c" style="left:600px;width:90px;"><span class="st st-p">进行中</span></div>
<div class="td c" style="left:690px;width:110px;">已接受</div>
<div class="td l" style="left:800px;width:110px;"><span class="red">已逾期 171 天</span></div>
<div class="td c" style="left:910px;width:80px;">张小康</div>
<div class="td c" style="left:990px;width:90px;"><span class="lnk">张小康</span></div>
<div class="td l" style="left:1080px;width:220px;">长沙神漫文化科技有限公司</div>
<div class="td c" style="left:1300px;width:180px;"><span style="letter-spacing:.2px">2024年04月02日</span></div>
<div class="td c" style="left:1480px;width:180px;"><span style="letter-spacing:.2px">2024年04月07日</span></div>
</div>
<div class="tr" style="top:468px;">
<div class="td " style="left:0px;width:70px;"><span style="margin-left:16px">14</span></div>
<div class="td " style="left:70px;width:280px;"><span style="display:inline-block;width:28px"></span><span class="tag tag-b">道具</span><span class="tag tag-o" style="width:23px">S</span><span class="g" style="margin-left:7px;vertical-align:middle">EP001/SC01/</span><span style="vertical-align:middle">混天绫测试</span></div>
<div class="td l" style="left:350px;width:150px;">模型/拓扑UV</div>
<div class="td c" style="left:500px;width:100px;">-</div>
<div class="td c" style="left:600px;width:90px;"><span class="st st-p">进行中</span></div>
<div class="td c" style="left:690px;width:110px;">已接受</div>
<div class="td l" style="left:800px;width:110px;"><span class="red">已逾期 171 天</span></div>
<div class="td c" style="left:910px;width:80px;">张小康</div>
<div class="td c" style="left:990px;width:90px;"><span class="lnk">张小康</span></div>
<div class="td l" style="left:1080px;width:220px;">长沙神漫文化科技有限公司</div>
<div class="td c" style="left:1300px;width:180px;"><span style="letter-spacing:.2px">2024年04月02日</span></div>
<div class="td c" style="left:1480px;width:180px;"><span style="letter-spacing:.2px">2024年04月07日</span></div>
</div>
<div class="tr" style="top:504px;">
<div class="td " style="left:0px;width:70px;"><span style="margin-left:16px">15</span></div>
<div class="td " style="left:70px;width:280px;"><span style="display:inline-block;width:28px"></span><span class="tag tag-b">道具</span><span class="tag tag-o" style="width:23px">S</span><span class="g" style="margin-left:7px;vertical-align:middle">EP001/SC01/</span><span style="vertical-align:middle">混天绫测试</span></div>
<div class="td l" style="left:350px;width:150px;">概念/美术设计</div>
<div class="td c" style="left:500px;width:100px;">-</div>
<div class="td c" style="left:600px;width:90px;"><span class="st st-p">进行中</span></div>
<div class="td c" style="left:690px;width:110px;">已接受</div>
<div class="td l" style="left:800px;width:110px;"><span class="red">已逾期 171 天</span></div>
<div class="td c" style="left:910px;width:80px;">张小康</div>
<div class="td c" style="left:990px;width:90px;"><span class="lnk">张小康</span></div>
<div class="td l" style="left:1080px;width:220px;">长沙神漫文化科技有限公司</div>
<div class="td c" style="left:1300px;width:180px;"><span style="letter-spacing:.2px">2024年04月02日</span></div>
<div class="td c" style="left:1480px;width:180px;"><span style="letter-spacing:.2px">2024年04月07日</span></div>
</div>
<div class="tr" style="top:540px;">
<div class="td " style="left:0px;width:70px;"><span style="margin-left:16px">16</span></div>
<div class="td " style="left:70px;width:280px;"><span style="display:inline-block;width:28px"></span><span class="tag tag-b">关卡</span><span class="tag tag-o" style="width:23px">S</span><span class="g" style="margin-left:7px;vertical-align:middle">EP001/SC01/</span><span style="vertical-align:middle">关卡交付测试</span></div>
<div class="td l" style="left:350px;width:150px;">关卡制作/关卡白盒</div>
<div class="td c" style="left:500px;width:100px;">-</div>
<div class="td c" style="left:600px;width:90px;"><span class="st st-n">未开始</span></div>
<div class="td c" style="left:690px;width:110px;">待分配</div>
<div class="td l" style="left:800px;width:110px;"><span class="red"></span></div>
<div class="td c" style="left:910px;width:80px;">-</div>
<div class="td c" style="left:990px;width:90px;"><span class="lnk">-</span></div>
<div class="td l" style="left:1080px;width:220px;">长沙神漫文化科技有限公司</div>
<div class="td c" style="left:1300px;width:180px;">-</div>
<div class="td c" style="left:1480px;width:180px;">-</div>
</div>
<div class="tr" style="top:576px;">
<div class="td " style="left:0px;width:70px;"><span style="margin-left:16px">17</span></div>
<div class="td " style="left:70px;width:280px;"><span style="display:inline-block;width:28px"></span><span class="tag tag-b">关卡</span><span class="tag tag-o" style="width:23px">S</span><span class="g" style="margin-left:7px;vertical-align:middle">EP001/SC01/</span><span style="vertical-align:middle">关卡交付测试</span></div>
<div class="td l" style="left:350px;width:150px;">关卡制作/关卡灯光</div>
<div class="td c" style="left:500px;width:100px;">-</div>
<div class="td c" style="left:600px;width:90px;"><span class="st st-n">未开始</span></div>
<div class="td c" style="left:690px;width:110px;">待分配</div>
<div class="td l" style="left:800px;width:110px;"><span class="red"></span></div>
<div class="td c" style="left:910px;width:80px;">-</div>
<div class="td c" style="left:990px;width:90px;"><span class="lnk">-</span></div>
<div class="td l" style="left:1080px;width:220px;">长沙神漫文化科技有限公司</div>
<div class="td c" style="left:1300px;width:180px;">-</div>
<div class="td c" style="left:1480px;width:180px;">-</div>
</div>
<div class="tr" style="top:612px;">
<div class="td " style="left:0px;width:70px;"><span style="margin-left:16px">18</span></div>
<div class="td " style="left:70px;width:280px;"><span style="display:inline-block;width:28px"></span><span class="tag tag-b">关卡</span><span class="tag tag-o" style="width:23px">S</span><span class="g" style="margin-left:7px;vertical-align:middle">EP001/SC01/</span><span style="vertical-align:middle">关卡交付测试</span></div>
<div class="td l" style="left:350px;width:150px;">关卡制作/关卡氛围</div>
<div class="td c" style="left:500px;width:100px;">-</div>
<div class="td c" style="left:600px;width:90px;"><span class="st st-n">未开始</span></div>
<div class="td c" style="left:690px;width:110px;">待分配</div>
<div class="td l" style="left:800px;width:110px;"><span class="red"></span></div>
<div class="td c" style="left:910px;width:80px;">-</div>
<div class="td c" style="left:990px;width:90px;"><span class="lnk">-</span></div>
<div class="td l" style="left:1080px;width:220px;">长沙神漫文化科技有限公司</div>
<div class="td c" style="left:1300px;width:180px;">-</div>
<div class="td c" style="left:1480px;width:180px;">-</div>
</div>
<div class="tr" style="top:648px;">
<div class="td " style="left:0px;width:70px;"><span style="margin-left:16px">19</span></div>
<div class="td " style="left:70px;width:280px;"><span style="display:inline-block;width:28px"></span><span class="tag tag-b">关卡</span><span class="tag tag-o" style="width:23px">S</span><span class="g" style="margin-left:7px;vertical-align:middle">EP001/SC01/</span><span style="vertical-align:middle">关卡交付测试</span></div>
<div class="td l" style="left:350px;width:150px;">关卡制作/关卡方案</div>
<div class="td c" style="left:500px;width:100px;">-</div>
<div class="td c" style="left:600px;width:90px;"><span class="st st-p">进行中</span></div>
<div class="td c" style="left:690px;width:110px;">已接受</div>
<div class="td l" style="left:800px;width:110px;"><span class="red">已逾期 161 天</span></div>
<div class="td c" style="left:910px;width:80px;">张小康</div>
<div class="td c" style="left:990px;width:90px;"><span class="lnk">张小康</span></div>
<div class="td l" style="left:1080px;width:220px;">长沙神漫文化科技有限公司</div>
<div class="td c" style="left:1300px;width:180px;"><span style="letter-spacing:.2px">2024年05月14日</span></div>
<div class="td c" style="left:1480px;width:180px;"><span style="letter-spacing:.2px">2024年05月20日</span></div>
</div>
<div class="tr" style="top:684px;">
<div class="td " style="left:0px;width:70px;"><span style="margin-left:16px">20</span></div>
<div class="td " style="left:70px;width:280px;"><span style="display:inline-block;width:28px"></span><span class="tag tag-b">关卡</span><span class="tag tag-o" style="width:23px">S</span><span class="g" style="margin-left:7px;vertical-align:middle">EP001/SC01/</span><span style="vertical-align:middle">关卡交付测试</span></div>
<div class="td l" style="left:350px;width:150px;">关卡制作/关卡细化</div>
<div class="td c" style="left:500px;width:100px;">-</div>
<div class="td c" style="left:600px;width:90px;"><span class="st st-n">未开始</span></div>
<div class="td c" style="left:690px;width:110px;">待分配</div>
<div class="td l" style="left:800px;width:110px;"><span class="red"></span></div>
<div class="td c" style="left:910px;width:80px;">-</div>
<div class="td c" style="left:990px;width:90px;"><span class="lnk">-</span></div>
<div class="td l" style="left:1080px;width:220px;">长沙神漫文化科技有限公司</div>
<div class="td c" style="left:1300px;width:180px;">-</div>
<div class="td c" style="left:1480px;width:180px;">-</div>
</div>
<div class="tr" style="top:720px;">
<div class="td " style="left:0px;width:70px;"><span style="margin-left:16px">21</span></div>
<div class="td " style="left:70px;width:280px;"><span style="display:inline-block;width:28px"></span><span class="tag tag-b">关卡</span><span class="tag tag-o" style="width:23px">S</span><span class="g" style="margin-left:7px;vertical-align:middle">EP001/SC01/</span><span style="vertical-align:middle">关卡交付测试</span></div>
<div class="td l" style="left:350px;width:150px;">概念/美术设计</div>
<div class="td c" style="left:500px;width:100px;">-</div>
<div class="td c" style="left:600px;width:90px;"><span class="st st-p">进行中</span></div>
<div class="td c" style="left:690px;width:110px;">已接受</div>
<div class="td l" style="left:800px;width:110px;"><span class="red">已逾期 200 天</span></div>
<div class="td c" style="left:910px;width:80px;">张小康</div>
<div class="td c" style="left:990px;width:90px;"><span class="lnk">张小康</span></div>
<div class="td l" style="left:1080px;width:220px;">长沙神漫文化科技有限公司</div>
<div class="td " style="left:1300px;width:180px;padding-left:24px;"><svg class="cal" viewBox="0 0 12 12"><rect x=".6" y="1.600" width="10.800" height="9.800" rx=".8" fill="none" stroke="#aeb1b8" stroke-width="1"/><path d="M.600 4.300h10.800M3.300 0v2.600M8.700 0v2.600" stroke="#aeb1b8" stroke-width="1"/><path d="M2.600 6.400h6.800M2.600 8.600h6.800" stroke="#c4c7cc" stroke-width=".8" stroke-dasharray="1.400 .6"/></svg><span style="letter-spacing:.2px">2024年03月04日</span></div>
<div class="td " style="left:1480px;width:180px;padding-left:24px;"><svg class="cal" viewBox="0 0 12 12"><rect x=".6" y="1.600" width="10.800" height="9.800" rx=".8" fill="none" stroke="#aeb1b8" stroke-width="1"/><path d="M.600 4.300h10.800M3.300 0v2.600M8.700 0v2.600" stroke="#aeb1b8" stroke-width="1"/><path d="M2.600 6.400h6.800M2.600 8.600h6.800" stroke="#c4c7cc" stroke-width=".8" stroke-dasharray="1.400 .6"/></svg><span style="letter-spacing:.2px">2024年03月08日</span></div>
</div>
<div class="tr" style="top:756px;">
<div class="td " style="left:0px;width:70px;"><span style="margin-left:16px">22</span></div>
<div class="td " style="left:70px;width:280px;"><span style="display:inline-block;width:28px"></span><span class="tag tag-b">角色</span><span class="tag tag-o" style="width:23px">S</span><span class="g" style="margin-left:7px;vertical-align:middle">EP001/SC01/</span><span style="vertical-align:middle">龙</span></div>
<div class="td l" style="left:350px;width:150px;">模型/引擎材质</div>
<div class="td c" style="left:500px;width:100px;">-</div>
<div class="td c" style="left:600px;width:90px;"><span class="st st-p">进行中</span></div>
<div class="td c" style="left:690px;width:110px;">已接受</div>
<div class="td l" style="left:800px;width:110px;"><span class="red">已逾期 200 天</span></div>
<div class="td c" style="left:910px;width:80px;">罗宸楠</div>
<div class="td c" style="left:990px;width:90px;"><span class="lnk">罗宸楠</span></div>
<div class="td l" style="left:1080px;width:220px;">长沙神漫文化科技有限公司</div>
<div class="td " style="left:1300px;width:180px;padding-left:24px;"><svg class="cal" viewBox="0 0 12 12"><rect x=".6" y="1.600" width="10.800" height="9.800" rx=".8" fill="none" stroke="#aeb1b8" stroke-width="1"/><path d="M.600 4.300h10.800M3.300 0v2.600M8.700 0v2.600" stroke="#aeb1b8" stroke-width="1"/><path d="M2.600 6.400h6.800M2.600 8.600h6.800" stroke="#c4c7cc" stroke-width=".8" stroke-dasharray="1.400 .6"/></svg><span style="letter-spacing:.2px">2024年03月04日</span></div>
<div class="td " style="left:1480px;width:180px;padding-left:24px;"><svg class="cal" viewBox="0 0 12 12"><rect x=".6" y="1.600" width="10.800" height="9.800" rx=".8" fill="none" stroke="#aeb1b8" stroke-width="1"/><path d="M.600 4.300h10.800M3.300 0v2.600M8.700 0v2.600" stroke="#aeb1b8" stroke-width="1"/><path d="M2.600 6.400h6.800M2.600 8.600h6.800" stroke="#c4c7cc" stroke-width=".8" stroke-dasharray="1.400 .6"/></svg><span style="letter-spacing:.2px">2024年03月08日</span></div>
</div>
</div>
<div class="abs" style="left:1544px;top:124px;width:8px;height:792px;border-left:1px solid #e3e4e6;border-right:1px solid #e3e4e6"></div>
<div class="abs" style="left:1544px;top:124px;width:8px;height:340px;border-radius:4px;background:#d6d6d6"></div>
<div class="abs" style="left:0;top:915px;width:1552px;height:1px;background:#e3e4e6"></div>
<div class="abs" style="left:0;top:908px;width:945px;height:8px;border-radius:4px;background:#d2d2d2"></div>
<div class="abs" style="left:8px;top:918px;width:80px;height:24px;border:1px solid #dcdee2;border-radius:4px"></div>
<div class="t" style="left:24px;top:920px;color:#555">50</div>
<svg class="chev" style="left:65px;top:925px" viewBox="0 0 10 6"><path d="M1 1l4 4 4-4" fill="none" stroke="#8a8d93" stroke-width="1"/></svg>
<div class="t" style="left:96px;top:920px;color:#333">共计 108 项</div>
<div class="t" style="left:175px;top:920px;color:#333">已选择 1 项</div>
</div>
</div>
<div id="mask"></div>
<div id="modal">
<div class="t" style="left:20px;top:13px;font-size:14px;color:#383838">分配任务</div>
<svg class="abs" style="left:1170px;top:16px;width:12px;height:12px" viewBox="0 0 12 12"><path d="M1 1l10 10M11 1 1 11" stroke="#8c8c8c" stroke-width="1"/></svg>
<div class="abs" style="left:0;top:47px;width:1200px;height:1px;background:#dde2ec"></div>
<div class="abs" style="left:0;top:48px;width:1200px;height:35px;background:#f4f4f5"></div>
<svg class="abs" style="left:17px;top:58px;width:14px;height:14px" viewBox="0 0 14 14"><circle cx="7" cy="7" r="7" fill="#9a9ca1"/><text x="7.200" y="11" font-size="10.500" font-style="italic" font-weight="bold" text-anchor="middle" fill="#fff" font-family="Liberation Serif,serif">i</text></svg>
<div class="t" style="left:40px;top:55px;color:#9a9ca1">共计 <b>1</b> 条操作数据</div>
<div class="t" style="left:158px;top:55px;color:#1cc55a">成功 <b>0</b> 条数据</div>
<div class="t" style="left:252px;top:55px;color:#f01a33">失败 <b>0</b> 条数据</div>
<div class="abs" style="left:0;top:82px;width:1200px;height:36px;background:#f2f3f5;border-top:1px solid #e4e5e8;border-bottom:1px solid #e4e5e8">
<div class="mth" style="left:0px;width:60px;padding-left:20px;;top:-1px">操作</div>
<div class="mth" style="left:60px;width:180px;padding-left:10px;;top:-1px">环节/工序名</div>
<div class="mth" style="left:240px;width:280px;padding-left:10px;;top:-1px">任务名称</div>
<div class="mth" style="left:520px;width:239px;padding-left:10px;;top:-1px">组长</div>
<div class="mth" style="left:759px;width:100px;text-align:center;;top:-1px">制作人</div>
<div class="mth" style="left:859px;width:80px;text-align:center;;top:-1px">制作难度</div>
<div class="mth" style="left:939px;width:80px;text-align:center;padding-left:9px;;top:-1px">预估工时</div>
<div class="mth" style="left:1019px;width:181px;text-align:center;;top:-1px">计划时间</div>
</div>
<div class="abs" style="left:0;top:118px;width:1200px;height:36px;background:#f5f5f5;border-bottom:1px solid #e4e5e8">
<div class="mtd" style="left:0px;width:60px"><span style="color:#f5473b;margin-left:10px">移除</span></div>
<div class="mtd" style="left:60px;width:180px"><svg style="width:10px;height:6px;margin-left:12px;vertical-align:1px" viewBox="0 0 10 6"><path d="M0 0h10L5 6z" fill="#808080"/></svg><span style="margin-left:6px">模型</span></div>
<div class="mtd" style="left:240px;width:280px"><span style="margin-left:10px">-</span></div>
<div class="mtd" style="left:520px;width:239px"><span class="ph" style="margin-left:11px">批量设置</span></div>
<div class="mtd" style="left:759px;width:100px"><span class="ph" style="margin-left:11px">批量设置</span></div>
<div class="mtd" style="left:859px;width:80px"><span class="ph" style="margin-left:16px">批量设置</span></div>
<div class="mtd" style="left:939px;width:80px"><span class="ph" style="margin-left:21px">批量设置</span></div>
<div class="mtd" style="left:1019px;width:181px"><span class="ph" style="margin-left:11px">批量设置</span></div>
</div>
<div class="abs" style="left:0;top:154px;width:1200px;height:36px;background:#ecf2fe;border-bottom:1px solid #e4e5e8">
<div class="mtd" style="left:0px;width:60px"><span style="color:#f5473b;margin-left:10px">移除</span></div>
<div class="mtd" style="left:60px;width:180px"><span style="margin-left:29px">引擎材质</span></div>
<div class="mtd" style="left:240px;width:280px"><span class="tag tag-b" style="margin-left:10px">角色</span><span class="tag tag-o" style="width:32px">S+</span><span class="g" style="margin-left:6px;vertical-align:middle">EP001/SC01/</span><span style="vertical-align:middle">熬炳测试</span></div>
<div class="mtd" style="left:520px;width:239px"><span class="ph" style="margin-left:11px">请选择</span></div>
<div class="mtd" style="left:759px;width:100px"><span style="margin-left:12px">-</span></div>
<div class="mtd" style="left:859px;width:80px"><span style="display:inline-block;margin-left:23px;position:relative;top:-2px;width:34px;height:22px;line-height:22px;overflow:hidden;border:1px solid #dad7fb;border-radius:2px;background:#f0efff;color:#4c3ff0;text-align:center;vertical-align:middle;font-size:12px;letter-spacing:1px;padding-left:1px">S+</span></div>
<div class="mtd" style="left:939px;width:80px"><span style="margin-left:12px;font-size:14px;color:#333;position:relative;top:-1px">0.00</span><span class="ph" style="margin-left:6px">人天</span></div>
<div class="mtd" style="left:1019px;width:181px"><span style="margin-left:11px;letter-spacing:.45px">2024-03-04 至 2024-04-07</span></div>
</div>
<div class="abs" style="left:0;top:541px;width:1200px;height:46px;background:#fff;border-top:2px solid #eeeeee"></div>
<div class="abs" style="left:1062px;top:551px;width:56px;height:28px;border:1px solid #d6d9e6;border-radius:3px;background:#fff;color:#666;text-align:center;line-height:27px">取消</div>
<div class="abs" style="left:1128px;top:551px;width:56px;height:28px;border-radius:3px;background:#4940f2;color:#fff;text-align:center;line-height:29px;font-weight:bold">确认</div>
</div>
<div id="dd">
<div class="abs" style="left:3px;top:4px;width:292px;height:32px;border:1px solid #ccd0ee;border-radius:4px"></div>
<svg class="abs" style="left:15px;top:14px;width:12px;height:12px" viewBox="0 0 12 12"><circle cx="5.300" cy="5.300" r="4.200" fill="none" stroke="#b9bcc2" stroke-width="1"/><path d="M8.400 8.400 11 11" stroke="#b9bcc2" stroke-width="1"/></svg>
<div class="t" style="left:34px;top:10px;color:#c4c6cc">搜索</div>
<div class="t" style="left:13px;top:46px;color:#333">团队</div><div class="t" style="left:65px;top:46px;color:#4240e6;font-weight:bold">外部</div><div class="t" style="left:117px;top:46px;color:#333">集团</div>
<div class="abs" style="left:0;top:75px;width:298px;height:1px;background:#dfe5f2"></div><div class="abs" style="left:65px;top:74px;width:24px;height:2px;background:#4240e6"></div>
<div class="opt" style="top:89px"><span>传媒有限公司</span></div>
<div class="opt" style="top:119px"><span>科技有限公司武汉分公司</span></div>
<div class="opt" style="top:149px"><span>科技发展有限公司</span></div>
<div class="opt" style="top:179px"><span>文化有限公司</span></div>
<div class="opt" style="top:209px"><span>科技有限公司</span></div>
<div class="opt" style="top:239px"><span>化科技有限公司</span></div>
<div class="opt" style="top:269px"><span>媒有限公司</span></div>
<div class="opt" style="top:299px"><span>技有限公司</span></div>
<div class="opt" style="top:329px"><span>科技有限公司</span></div>
<div class="px" style="left:6px;top:82px;width:12px;height:17px;background:#fdfdfd"></div>
<div class="px" style="left:18px;top:82px;width:20px;height:17px;background:#fafafa"></div>
<div class="px" style="left:38px;top:82px;width:20px;height:17px;background:#dcdcdc"></div>
<div class="px" style="left:78px;top:82px;width:10px;height:17px;background:#e8e8e8"></div>
<div class="px" style="left:6px;top:99px;width:12px;height:20px;background:#c4c4c4"></div>
<div class="px" style="left:18px;top:99px;width:20px;height:20px;background:#c0c0c0"></div>
<div class="px" style="left:38px;top:99px;width:20px;height:20px;background:#b8b8b8"></div>
<div class="px" style="left:78px;top:99px;width:10px;height:20px;background:#ebebeb"></div>
<div class="px" style="left:6px;top:139px;width:12px;height:20px;background:#ececec"></div>
<div class="px" style="left:18px;top:139px;width:20px;height:20px;background:#f4f4f4"></div>
<div class="px" style="left:38px;top:139px;width:20px;height:20px;background:#e4e4e4"></div>
<div class="px" style="left:78px;top:139px;width:10px;height:20px;background:#ececec"></div>
<div class="px" style="left:6px;top:159px;width:12px;height:20px;background:#ececec"></div>
<div class="px" style="left:18px;top:159px;width:40px;height:20px;background:#e2e2e2"></div>
<div class="px" style="left:78px;top:159px;width:10px;height:20px;background:#f4f4f4"></div>
<div class="px" style="left:18px;top:199px;width:20px;height:20px;background:#f0f0f0"></div>
<div class="px" style="left:38px;top:199px;width:20px;height:20px;background:#a0a0a0"></div>
<div class="px" style="left:58px;top:199px;width:20px;height:20px;background:#fafafa"></div>
<div class="px" style="left:78px;top:199px;width:10px;height:20px;background:#e8e8e8"></div>
<div class="px" style="left:6px;top:219px;width:12px;height:20px;background:#dedede"></div>
<div class="px" style="left:18px;top:219px;width:20px;height:20px;background:#d6d6d6"></div>
<div class="px" style="left:38px;top:219px;width:20px;height:20px;background:#c8c8c8"></div>
<div class="px" style="left:78px;top:219px;width:10px;height:20px;background:#f4f4f4"></div>
<div class="px" style="left:18px;top:259px;width:20px;height:20px;background:#f0f0f0"></div>
<div class="px" style="left:38px;top:259px;width:20px;height:20px;background:#c8c8c8"></div>
<div class="px" style="left:58px;top:259px;width:20px;height:20px;background:#e0e0e0"></div>
<div class="px" style="left:78px;top:259px;width:10px;height:20px;background:#f0f0f0"></div>
<div class="px" style="left:6px;top:279px;width:12px;height:20px;background:#e0e0e0"></div>
<div class="px" style="left:18px;top:279px;width:20px;height:20px;background:#ececec"></div>
<div class="px" style="left:58px;top:279px;width:20px;height:20px;background:#c8c8c8"></div>
<div class="px" style="left:78px;top:279px;width:10px;height:20px;background:#e0e0e0"></div>
<div class="px" style="left:18px;top:319px;width:20px;height:20px;background:#f4f4f4"></div>
<div class="px" style="left:38px;top:319px;width:20px;height:20px;background:#c4c4c4"></div>
<div class="px" style="left:58px;top:319px;width:20px;height:20px;background:#c0c0c0"></div>
<div class="px" style="left:78px;top:319px;width:10px;height:20px;background:#fafafa"></div>
<div class="px" style="left:6px;top:339px;width:32px;height:19px;background:#fafafa"></div>
<div class="px" style="left:38px;top:339px;width:20px;height:19px;background:#bebebe"></div>
<div class="px" style="left:58px;top:339px;width:20px;height:19px;background:#e0e0e0"></div>
<div class="px" style="left:78px;top:339px;width:10px;height:19px;background:#f8f8f8"></div>
<div class="abs" style="left:286px;top:84px;width:7px;height:53px;border-radius:4px;background:#d2d2d2"></div>
</div>
<div class="abs" style="left:0;top:0;width:1920px;height:1040px;overflow:hidden;pointer-events:none"><div class="wm" style="left:38px;top:12px">张小康 9054</div><div class="wm" style="left:238px;top:12px">张小康 9054</div><div class="wm" style="left:438px;top:12px">张小康 9054</div><div class="wm" style="left:638px;top:12px">张小康 9054</div><div class="wm" style="left:838px;top:12px">张小康 9054</div><div class="wm" style="left:1038px;top:12px">张小康 9054</div><div class="wm" style="left:1238px;top:12px">张小康 9054</div><div class="wm" style="left:1438px;top:12px">张小康 9054</div><div class="wm" style="left:1638px;top:12px">张小康 9054</div><div class="wm" style="left:1838px;top:12px">张小康 9054</div><div class="wm" style="left:38px;top:112px">张小康 9054</div><div class="wm" style="left:238px;top:112px">张小康 9054</div><div class="wm" style="left:438px;top:112px">张小康 9054</div><div class="wm" style="left:638px;top:112px">张小康 9054</div><div class="wm" style="left:838px;top:112px">张小康 9054</div><div class="wm" style="left:1038px;top:112px">张小康 9054</div><div class="wm" style="left:1238px;top:112px">张小康 9054</div><div class="wm" style="left:1438px;top:112px">张小康 9054</div><div class="wm" style="left:1638px;top:112px">张小康 9054</div><div class="wm" style="left:1838px;top:112px">张小康 9054</div><div class="wm" style="left:38px;top:212px">张小康 9054</div><div class="wm" style="left:238px;top:212px">张小康 9054</div><div class="wm" style="left:438px;top:212px">张小康 9054</div><div class="wm" style="left:638px;top:212px">张小康 9054</div><div class="wm" style="left:838px;top:212px">张小康 9054</div><div class="wm" style="left:1038px;top:212px">张小康 9054</div><div class="wm" style="left:1238px;top:212px">张小康 9054</div><div class="wm" style="left:1438px;top:212px">张小康 9054</div><div class="wm" style="left:1638px;top:212px">张小康 9054</div><div class="wm" style="left:1838px;top:212px">张小康 9054</div><div class="wm" style="left:38px;top:312px">张小康 9054</div><div class="wm" style="left:238px;top:312px">张小康 9054</div><div class="wm" style="left:438px;top:312px">张小康 9054</div><div class="wm" style="left:638px;top:312px">张小康 9054</div><div class="wm" style="left:838px;top:312px">张小康 9054</div><div class="wm" style="left:1038px;top:312px">张小康 9054</div><div class="wm" style="left:1238px;top:312px">张小康 9054</div><div class="wm" style="left:1438px;top:312px">张小康 9054</div><div class="wm" style="left:1638px;top:312px">张小康 9054</div><div class="wm" style="left:1838px;top:312px">张小康 9054</div><div class="wm" style="left:38px;top:412px">张小康 9054</div><div class="wm" style="left:238px;top:412px">张小康 9054</div><div class="wm" style="left:438px;top:412px">张小康 9054</div><div class="wm" style="left:638px;top:412px">张小康 9054</div><div class="wm" style="left:838px;top:412px">张小康 9054</div><div class="wm" style="left:1038px;top:412px">张小康 9054</div><div class="wm" style="left:1238px;top:412px">张小康 9054</div><div class="wm" style="left:1438px;top:412px">张小康 9054</div><div class="wm" style="left:1638px;top:412px">张小康 9054</div><div class="wm" style="left:1838px;top:412px">张小康 9054</div><div class="wm" style="left:38px;top:512px">张小康 9054</div><div class="wm" style="left:238px;top:512px">张小康 9054</div><div class="wm" style="left:438px;top:512px">张小康 9054</div><div class="wm" style="left:638px;top:512px">张小康 9054</div><div class="wm" style="left:838px;top:512px">张小康 9054</div><div class="wm" style="left:1038px;top:512px">张小康 9054</div><div class="wm" style="left:1238px;top:512px">张小康 9054</div><div class="wm" style="left:1438px;top:512px">张小康 9054</div><div class="wm" style="left:1638px;top:512px">张小康 9054</div><div class="wm" style="left:1838px;top:512px">张小康 9054</div><div class="wm" style="left:38px;top:612px">张小康 9054</div><div class="wm" style="left:238px;top:612px">张小康 9054</div><div class="wm" style="left:438px;top:612px">张小康 9054</div><div class="wm" style="left:638px;top:612px">张小康 9054</div><div class="wm" style="left:838px;top:612px">张小康 9054</div><div class="wm" style="left:1038px;top:612px">张小康 9054</div><div class="wm" style="left:1238px;top:612px">张小康 9054</div><div class="wm" style="left:1438px;top:612px">张小康 9054</div><div class="wm" style="left:1638px;top:612px">张小康 9054</div><div class="wm" style="left:1838px;top:612px">张小康 9054</div><div class="wm" style="left:38px;top:712px">张小康 9054</div><div class="wm" style="left:238px;top:712px">张小康 9054</div><div class="wm" style="left:438px;top:712px">张小康 9054</div><div class="wm" style="left:638px;top:712px">张小康 9054</div><div class="wm" style="left:838px;top:712px">张小康 9054</div><div class="wm" style="left:1038px;top:712px">张小康 9054</div><div class="wm" style="left:1238px;top:712px">张小康 9054</div><div class="wm" style="left:1438px;top:712px">张小康 9054</div><div class="wm" style="left:1638px;top:712px">张小康 9054</div><div class="wm" style="left:1838px;top:712px">张小康 9054</div><div class="wm" style="left:38px;top:812px">张小康 9054</div><div class="wm" style="left:238px;top:812px">张小康 9054</div><div class="wm" style="left:438px;top:812px">张小康 9054</div><div class="wm" style="left:638px;top:812px">张小康 9054</div><div class="wm" style="left:838px;top:812px">张小康 9054</div><div class="wm" style="left:1038px;top:812px">张小康 9054</div><div class="wm" style="left:1238px;top:812px">张小康 9054</div><div class="wm" style="left:1438px;top:812px">张小康 9054</div><div class="wm" style="left:1638px;top:812px">张小康 9054</div><div class="wm" style="left:1838px;top:812px">张小康 9054</div><div class="wm" style="left:38px;top:912px">张小康 9054</div><div class="wm" style="left:238px;top:912px">张小康 9054</div><div class="wm" style="left:438px;top:912px">张小康 9054</div><div class="wm" style="left:638px;top:912px">张小康 9054</div><div class="wm" style="left:838px;top:912px">张小康 9054</div><div class="wm" style="left:1038px;top:912px">张小康 9054</div><div class="wm" style="left:1238px;top:912px">张小康 9054</div><div class="wm" style="left:1438px;top:912px">张小康 9054</div><div class="wm" style="left:1638px;top:912px">张小康 9054</div><div class="wm" style="left:1838px;top:912px">张小康 9054</div><div class="wm" style="left:38px;top:1012px">张小康 9054</div><div class="wm" style="left:238px;top:1012px">张小康 9054</div><div class="wm" style="left:438px;top:1012px">张小康 9054</div><div class="wm" style="left:638px;top:1012px">张小康 9054</div><div class="wm" style="left:838px;top:1012px">张小康 9054</div><div class="wm" style="left:1038px;top:1012px">张小康 9054</div><div class="wm" style="left:1238px;top:1012px">张小康 9054</div><div class="wm" style="left:1438px;top:1012px">张小康 9054</div><div class="wm" style="left:1638px;top:1012px">张小康 9054</div><div class="wm" style="left:1838px;top:1012px">张小康 9054</div></div>
</div></body></html>
